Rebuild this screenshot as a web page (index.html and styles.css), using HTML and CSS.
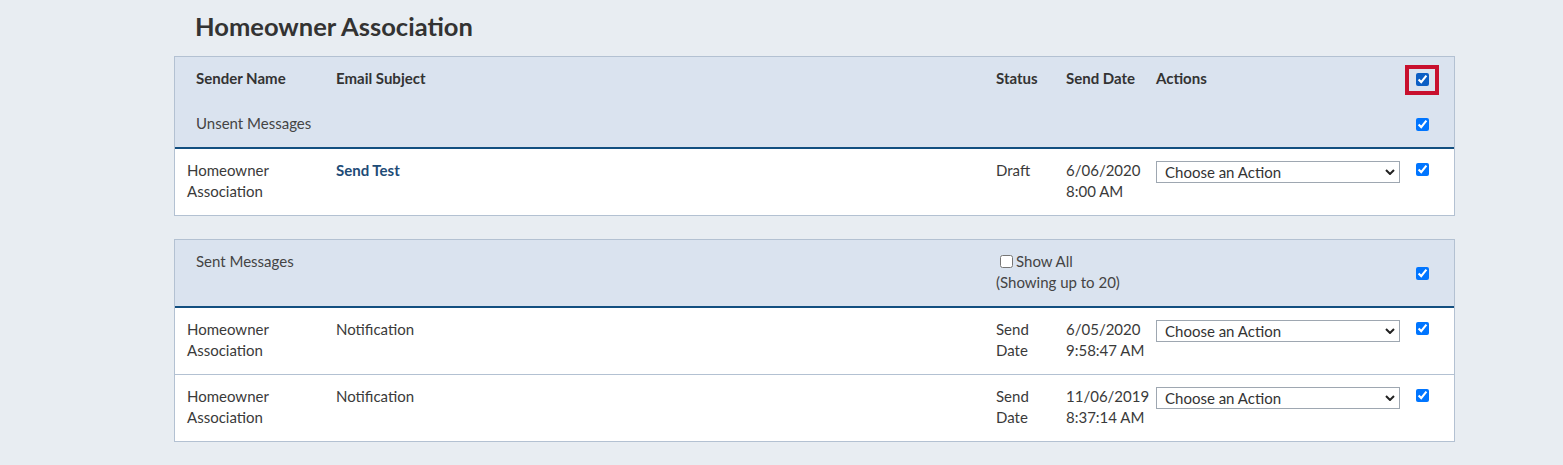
FILE: index.html
```html
<!DOCTYPE html>
<html lang="en">
<head>
<meta charset="utf-8">
<title>Homeowner Association</title>
<link rel="stylesheet" href="styles.css">
</head>
<body>
<div class="page">
  <h1 class="title">Homeowner Association</h1>

  <section class="panel">
    <div class="head">
      <div class="row colheads">
        <div class="cell sender">Sender Name</div>
        <div class="cell">Email Subject</div>
        <div class="cell">Status</div>
        <div class="cell">Send Date</div>
        <div class="cell">Actions</div>
        <div class="cell check"><span class="ring"></span><input class="cb cb-top cb-hover" type="checkbox" checked></div>
      </div>
      <div class="row group">
        <div class="cell sender span-label">Unsent Messages</div>
        <div class="cell check"><input class="cb cb-group" type="checkbox" checked></div>
      </div>
    </div>
    <div class="row item">
      <div class="cell sender">Homeowner Association</div>
      <div class="cell subject-strong">Send Test</div>
      <div class="cell">Draft</div>
      <div class="cell">6/06/2020 8:00 AM</div>
      <div class="cell">
        <div class="action-select">
          <select><option>Choose an Action</option></select>
          <svg class="chev" width="10" height="6" viewBox="0 0 10 6"><path d="M1 1 L5 5 L9 1" fill="none" stroke="#222" stroke-width="2"/></svg>
        </div>
      </div>
      <div class="cell check"><input class="cb cb-row" type="checkbox" checked></div>
    </div>
  </section>

  <section class="panel">
    <div class="head">
      <div class="row group-sent">
        <div class="cell sender span-sent">Sent Messages</div>
        <div class="cell span-show">
          <label class="showall"><input class="cb-show" type="checkbox"><span>Show All</span></label>
          <div>(Showing up to 20)</div>
        </div>
        <div class="cell check check-mid"><input class="cb" type="checkbox" checked></div>
      </div>
    </div>
    <div class="row item">
      <div class="cell sender">Homeowner Association</div>
      <div class="cell">Notification</div>
      <div class="cell">Send Date</div>
      <div class="cell">6/05/2020 9:58:47 AM</div>
      <div class="cell">
        <div class="action-select">
          <select><option>Choose an Action</option></select>
          <svg class="chev" width="10" height="6" viewBox="0 0 10 6"><path d="M1 1 L5 5 L9 1" fill="none" stroke="#222" stroke-width="2"/></svg>
        </div>
      </div>
      <div class="cell check"><input class="cb cb-row" type="checkbox" checked></div>
    </div>
    <div class="row item">
      <div class="cell sender">Homeowner Association</div>
      <div class="cell">Notification</div>
      <div class="cell">Send Date</div>
      <div class="cell">11/06/2019 8:37:14 AM</div>
      <div class="cell">
        <div class="action-select">
          <select><option>Choose an Action</option></select>
          <svg class="chev" width="10" height="6" viewBox="0 0 10 6"><path d="M1 1 L5 5 L9 1" fill="none" stroke="#222" stroke-width="2"/></svg>
        </div>
      </div>
      <div class="cell check"><input class="cb cb-row" type="checkbox" checked></div>
    </div>
  </section>
</div>
</body>
</html>
```
FILE: styles.css
```css
html, body {
  margin: 0;
  background: #e8edf2;
}
body {
  font-family: Lato, "Noto Sans", sans-serif;
  color: #3a3a3a;
}
.page {
  padding: 9px 0 24px 174px;
}
.title {
  margin: 0 0 13px 21px;
  font-size: 25.5px;
  line-height: 34px;
  font-weight: 700;
  color: #333;
}
.panel {
  width: 1281px;
  box-sizing: border-box;
  border: 1px solid #b3c1d2;
  background: #fff;
}
.panel + .panel {
  margin-top: 23px;
}
.head {
  background: #dae3ef;
  border-bottom: 2px solid #134f80;
}
.row {
  display: grid;
  grid-template-columns: 161px 660px 70px 90px 260px 1fr;
  font-size: 15px;
  line-height: 21px;
}
.cell {
  padding-right: 10px;
  min-width: 0;
}
.sender {
  padding-left: 12px;
}
.head .sender {
  padding-left: 21px;
}
.colheads {
  padding: 11px 0 12px;
  font-weight: 700;
  color: #333;
}
.group {
  padding: 12px 0 13px;
  color: #444;
}
.span-label {
  grid-column: 1 / 6;
}
.group-sent {
  padding: 11px 0 13px;
  color: #444;
}
.span-sent {
  grid-column: 1 / 3;
}
.span-show {
  grid-column: 3 / 6;
}
.showall {
  display: flex;
  align-items: center;
}
.cb-show {
  margin: 0 3px 0 4px;
  width: 13px;
  height: 13px;
}
.item {
  padding: 11px 0 13px;
}
.item + .item {
  border-top: 1px solid #b3c1d2;
}
.subject-strong {
  font-weight: 700;
  color: #1e4c77;
}
.check {
  position: relative;
}
.check-mid {
  align-self: center;
  padding-top: 2px;
}
.cb {
  display: block;
  margin: 0;
  width: 13px;
  height: 13px;
}
.cb-top {
  margin-top: 5px;
}
.cb-hover {
  accent-color: #0b5ec4;
}
.cb-group {
  margin-top: 5px;
}
.cb-row {
  margin-top: 3px;
}
.ring {
  position: absolute;
  left: -11px;
  top: -3px;
  width: 34px;
  height: 30px;
  box-sizing: border-box;
  border: 4px solid #c8102e;
}
.action-select {
  position: relative;
  width: 244px;
  margin-top: 1px;
}
.action-select select {
  display: block;
  width: 100%;
  height: 22px;
  box-sizing: border-box;
  appearance: none;
  -webkit-appearance: none;
  border: 1px solid #9ea7b1;
  border-radius: 0;
  background: #fff;
  font-family: inherit;
  font-size: 15px;
  color: #333;
  padding: 0 24px 1px 8px;
  margin: 0;
}
.chev {
  position: absolute;
  right: 5px;
  top: 8px;
  pointer-events: none;
}
```
